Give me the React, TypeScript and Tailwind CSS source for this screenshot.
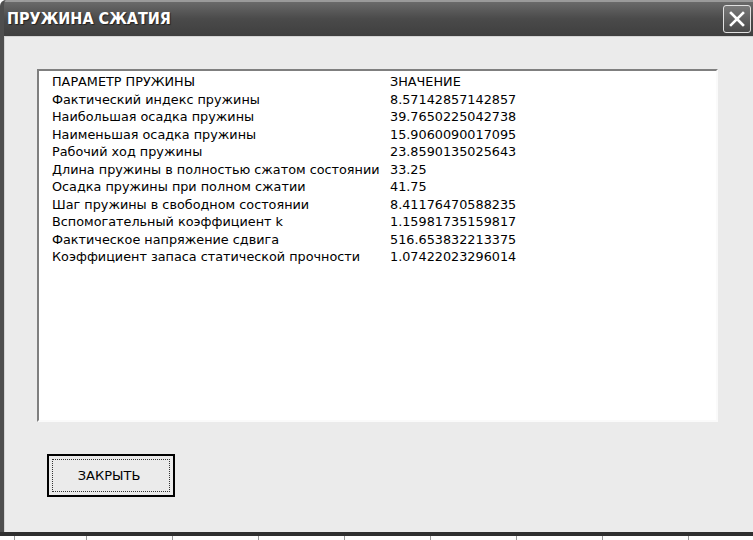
import React from "react";

const rows: [string, string][] = [
  ["ПАРАМЕТР ПРУЖИНЫ", "ЗНАЧЕНИЕ"],
  ["Фактический индекс пружины", "8.57142857142857"],
  ["Наибольшая осадка пружины", "39.7650225042738"],
  ["Наименьшая осадка пружины", "15.9060090017095"],
  ["Рабочий ход пружины", "23.8590135025643"],
  ["Длина пружины в полностью сжатом состоянии", "33.25"],
  ["Осадка пружины при полном сжатии", "41.75"],
  ["Шаг пружины в свободном состоянии", "8.41176470588235"],
  ["Вспомогательный коэффициент k", "1.15981735159817"],
  ["Фактическое напряжение сдвига", "516.653832213375"],
  ["Коэффициент запаса статической прочности", "1.07422023296014"],
];

export default function App() {
  return (
    <div className="w-[753px] h-[540px] overflow-hidden bg-white flex flex-col" style={{ fontFamily: '"DejaVu Sans", sans-serif' }}>
      <div className="flex-1 flex flex-col rounded-tl-[6px] border-l-[4px] border-[#4e4e4e] bg-[#4e4e4e] overflow-hidden">
        {/* title bar */}
        <div className="h-[36px] flex items-center justify-between bg-gradient-to-b from-[#6a6a6a] via-[#4a4a4a] to-[#3f3f3f] border-t-[2px] border-[#9a9a9a]">
          <span
            className="pl-[3px] text-white font-bold text-[16px] leading-none"
            style={{ fontFamily: '"DejaVu Sans Condensed", "DejaVu Sans", sans-serif', textShadow: "1px 1px 1px #222" }}
          >
            ПРУЖИНА СЖАТИЯ
          </span>
          <div className="mr-[2px] w-[28px] h-[28px] rounded-[3px] border-[1.5px] border-[#e0e0e0] bg-gradient-to-b from-[#7a7a7a] to-[#4a4a4a] flex items-center justify-center">
            <svg width="18" height="18" viewBox="0 0 18 18">
              <path d="M3 3 L15 15 M15 3 L3 15" stroke="white" strokeWidth="2.6" strokeLinecap="square" />
            </svg>
          </div>
        </div>
        {/* client */}
        <div className="flex-1 bg-[#ebebeb] border-t border-l border-[#d4d4d4] flex flex-col pl-[32px] pr-[35px] pt-[32px]">
          <div className="h-[353px] bg-white border-t-[2px] border-l-[2px] border-[#7f7f7f] border-r-[2px] border-b-[2px] border-r-[#fafafa] border-b-[#fafafa] pl-[13px] pt-[3px]">
            {rows.map(([a, b], i) => (
              <div key={i} className="flex h-[17.5px] items-center text-[12.8px] text-black leading-none">
                <span className="w-[338px] whitespace-nowrap">{a}</span>
                <span className="whitespace-nowrap">{b}</span>
              </div>
            ))}
          </div>
          <div className="mt-[32px] ml-[10px]">
            <div className="w-[128px] h-[43px] border-[2px] border-black bg-[#ebebeb] p-[3px]">
              <div className="w-full h-full border border-dotted border-[#333] flex items-center justify-center text-[13px] text-black pr-[4px]">
                ЗАКРЫТЬ
              </div>
            </div>
          </div>
        </div>
      </div>
      <div className="h-[4px] bg-[#2f2f2f]" />
      <div className="h-[4px] bg-white flex">
        {Array.from({ length: 9 }).map((_, i) => (
          <div key={i} className="w-[86px] shrink-0 flex">
            <div className={i === 0 ? "ml-[14px] w-px bg-[#999]" : "w-px bg-[#999]"} />
          </div>
        ))}
      </div>
    </div>
  );
}
